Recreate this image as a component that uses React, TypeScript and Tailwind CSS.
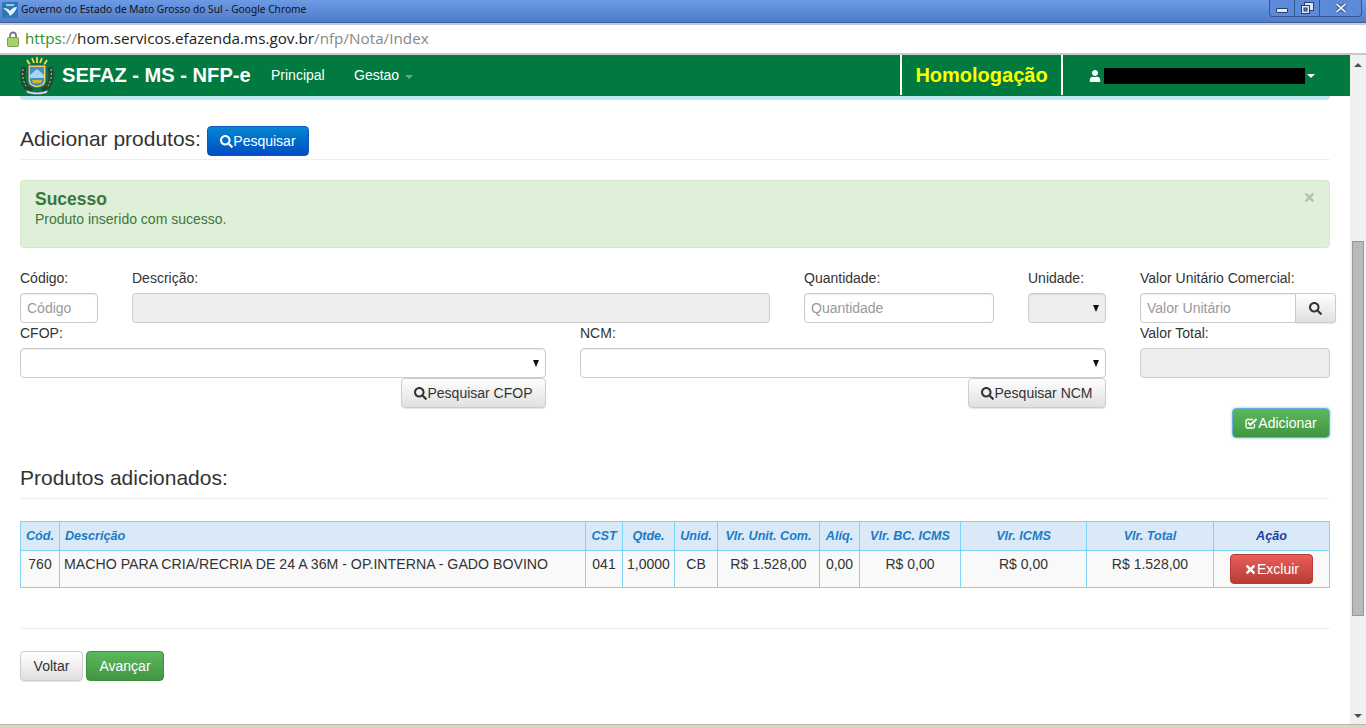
import { FaSearch, FaUser, FaTimes } from "react-icons/fa";

const columns = [
  { label: "Cód.", width: 39, value: "760" },
  { label: "Descrição", width: 526, value: "MACHO PARA CRIA/RECRIA DE 24 A 36M - OP.INTERNA - GADO BOVINO", left: true },
  { label: "CST", width: 37, value: "041" },
  { label: "Qtde.", width: 52, value: "1,0000" },
  { label: "Unid.", width: 43, value: "CB" },
  { label: "Vlr. Unit. Com.", width: 102, value: "R$ 1.528,00" },
  { label: "Alíq.", width: 40, value: "0,00" },
  { label: "Vlr. BC. ICMS", width: 101, value: "R$ 0,00" },
  { label: "Vlr. ICMS", width: 126, value: "R$ 0,00" },
  { label: "Vlr. Total", width: 127, value: "R$ 1.528,00" },
];

function Logo() {
  return (
    <svg width="34" height="38" viewBox="0 0 34 38">
      <g stroke="#f0e04a" strokeWidth="1.8">
        <path d="M17 0v6M12 1l2 5M22 1l-2 5M7 3l3 5M27 3l-3 5" />
      </g>
      <path d="M4 10c-2 8-2 15 3 21l5 3M30 10c2 8 2 15-3 21l-5 3" fill="none" stroke="#1f4a30" strokeWidth="5" />
      <path d="M3 12c-1 6 0 12 3 17M31 12c1 6 0 12-3 17" fill="none" stroke="#c4d2b4" strokeWidth="1" strokeDasharray="2 2" />
      <path d="M8 8h18v15c0 5-4 7-9 8-5-1-9-3-9-8z" fill="#e6d35a" stroke="#34506b" />
      <path d="M10 10h14v13c0 4-3 5-7 6-4-1-7-2-7-6z" fill="#3f8fd0" />
      <path d="M10 18l7-6 7 6v3H10z" fill="#a6d4ee" />
      <path d="M12 23h10l-1 3h-8z" fill="#d9b52a" />
      <path d="M6 33c7 3 15 3 22 0l-1 3c-7 2-13 2-20 0z" fill="#dfe8e8" stroke="#37606a" strokeWidth=".6" />
    </svg>
  );
}

function CheckIcon() {
  return (
    <svg width="13" height="12" viewBox="0 0 13 12" fill="none" stroke="white">
      <path d="M9.5 7v2.5a1.5 1.5 0 0 1-1.5 1.5H2.5A1.5 1.5 0 0 1 1 9.5V4a1.5 1.5 0 0 1 1.5-1.5H8" strokeWidth="1.3" />
      <path d="M3 5.5l2.4 2.4L11.5 2" strokeWidth="2" />
    </svg>
  );
}

function WindowButtons() {
  return (
    <div className="flex h-[17px] w-[93px] self-start rounded-b-[4px] border border-t-0 border-[#35558f] bg-[#5b8ad6]">
      <div className="flex w-[25px] items-center justify-center border-r border-[#35558f]">
        <div className="mt-[5px] h-[5px] w-[12px] rounded-[1px] border border-[#26406e] bg-[#dfe8f6]" />
      </div>
      <div className="flex w-[25px] items-center justify-center border-r border-[#35558f]">
        <svg width="13" height="12" viewBox="0 0 13 12" fill="none" stroke="#26406e">
          <rect x="3.5" y=".5" width="9" height="8" fill="#dfe8f6" />
          <rect x=".5" y="3.5" width="8" height="8" fill="#dfe8f6" />
          <rect x="3" y="6" width="3" height="3" fill="#5b8ad6" />
        </svg>
      </div>
      <div className="flex flex-1 items-center justify-center">
        <svg width="12" height="10" viewBox="0 0 12 10">
          <path d="M1.5 1l9 8M10.5 1l-9 8" stroke="#26406e" strokeWidth="3.4" />
          <path d="M1.5 1l9 8M10.5 1l-9 8" stroke="#dfe8f6" strokeWidth="1.8" />
        </svg>
      </div>
    </div>
  );
}

function Field({ label, className, children }: { label: string; className: string; children: React.ReactNode }) {
  return (
    <div className={className}>
      <div className="mb-[5px] h-[20px] leading-[20px]">{label}</div>
      {children}
    </div>
  );
}

function Select({ disabled }: { disabled?: boolean }) {
  return (
    <div className={`flex h-[30px] items-center justify-end rounded-[4px] border border-[#ccc] pr-[6px] shadow-[inset_0_1px_1px_rgba(0,0,0,0.075)] ${disabled ? "bg-[#eee]" : "bg-white"}`}>
      <svg width="6" height="7" viewBox="0 0 6 7"><path d="M0 0h6L3 7z" fill="#111" /></svg>
    </div>
  );
}

const inputClass = "h-[30px] w-full rounded-[4px] border border-[#ccc] bg-white px-[6px] text-[14px] shadow-[inset_0_1px_1px_rgba(0,0,0,0.075)] outline-none placeholder:text-[#999]";
const defaultBtn = "flex items-center justify-center rounded-[4px] border border-[#ccc] bg-gradient-to-b from-white to-[#e0e0e0] text-[#333] shadow-[0_1px_1px_rgba(0,0,0,0.1)]";

export default function App() {
  return (
    <div className="flex h-[728px] w-[1366px] flex-col overflow-hidden bg-white font-['Liberation_Sans',Arial,sans-serif] text-[14px] text-[#333]">
      {/* window title */}
      <div className="flex h-[23px] shrink-0 items-start justify-between border-b border-[#3a5f9e] bg-gradient-to-b from-[#6d9ae3] to-[#4f7ccb] pl-[2px] pr-[4px]">
        <div className="flex h-[20px] items-center gap-[3px]">
          <svg width="16" height="16" viewBox="0 0 16 16">
            <rect width="16" height="16" rx="1" fill="#2a7ab5" />
            <path d="M1 6c3 0 6 1 7 3 1-2 4-4 7-4-1 4-4 7-7 9-1-3-4-6-7-8z" fill="#e6f2f8" />
            <path d="M4 2h8v2H4z" fill="#9cc8e4" />
          </svg>
          <span className="font-['Noto_Sans',sans-serif] text-[10.2px] text-[#111]">Governo do Estado de Mato Grosso do Sul - Google Chrome</span>
        </div>
        <WindowButtons />
      </div>
      {/* address bar */}
      <div className="flex h-[32px] shrink-0 items-center border-y-2 border-y-[#c8c8c8] bg-white pl-[7px] pb-[1px] font-['Open_Sans',sans-serif] text-[15.25px]">
        <svg width="12" height="16" viewBox="0 0 12 16" className="mr-[6px]">
          <path d="M3 8V4.5a3 3 0 0 1 6 0V8" fill="none" stroke="#777" strokeWidth="1.8" />
          <rect x=".5" y="6.5" width="11" height="9" rx="1" fill="#a4d465" stroke="#7d9a55" />
        </svg>
        <span className="text-[#2f8f2f]">https</span>
        <span className="text-[#888]">://</span>
        <span className="text-[#222]">hom.servicos.efazenda.ms.gov.br</span>
        <span className="text-[#888]">/nfp/Nota/Index</span>
      </div>

      <div className="flex min-h-0 flex-1">
        <div className="flex w-[1350px] flex-col">
          {/* navbar */}
          <div className="flex h-[41px] shrink-0 items-center bg-[#007a3e] pl-[20px] text-white">
            <Logo />
            <span className="ml-[8px] w-[209px] text-[20.1px] font-bold">SEFAZ - MS - NFP-e</span>
            <span className="w-[83px]">Principal</span>
            <span className="flex items-center gap-[6px]">
              Gestao
              <span className="mt-[2px] h-0 w-0 border-x-[4px] border-t-[4px] border-x-transparent border-t-[#6aa886]" />
            </span>
            <div className="ml-auto flex h-[40px] w-[163px] items-center justify-center self-start border-x-2 border-white text-[20px] font-bold text-[#ffff00]">
              Homologação
            </div>
            <div className="flex w-[287px] items-center pl-[26px]">
              <FaUser className="mr-[3px] text-[12px]" />
              <div className="h-[16px] w-[201px] bg-black" />
              <span className="ml-[2px] h-0 w-0 border-x-[4px] border-t-[4px] border-x-transparent border-t-white" />
            </div>
          </div>

          <div className="min-h-0 flex-1 pl-[20px] pr-[20px]">
            <div className="h-[4px] rounded-b-[4px] bg-[#bce8f1]" />

            {/* add products */}
            <div className="mt-[26px] flex h-[34px] items-start gap-[6px] border-b border-[#eee]">
              <span className="text-[21px] leading-[26px]">Adicionar produtos:</span>
              <button className="flex h-[30px] w-[102px] items-center justify-center rounded-[4px] border border-[#0a5ab8] bg-gradient-to-b from-[#0a86d2] to-[#004dc4] text-white">
                <FaSearch className="text-[13px]" />Pesquisar
              </button>
            </div>

            <div className="relative mt-[20px] h-[68px] rounded-[4px] border border-[#d6e9c6] bg-[#dff0d8] px-[14px] pt-[8px] text-[#3c763d]">
              <div className="text-[17.5px] font-bold leading-[20px]">Sucesso</div>
              <div className="leading-[20px]">Produto inserido com sucesso.</div>
              <FaTimes className="absolute right-[13px] top-[10px] text-[13px] text-[#b4c4ae]" />
            </div>

            {/* form */}
            <div className="mt-[20px] flex">
              <Field label="Código:" className="mr-[34px] w-[78px] shrink-0">
                <input className={inputClass} placeholder="Código" />
              </Field>
              <Field label="Descrição:" className="mr-[34px] w-[638px] shrink-0">
                <div className="h-[30px] rounded-[4px] border border-[#ccc] bg-[#eee]" />
              </Field>
              <Field label="Quantidade:" className="mr-[34px] w-[190px] shrink-0">
                <input className={inputClass} placeholder="Quantidade" />
              </Field>
              <Field label="Unidade:" className="mr-[34px] w-[78px] shrink-0">
                <Select disabled />
              </Field>
              <Field label="Valor Unitário Comercial:" className="w-[196px] shrink-0">
                <div className="flex">
                  <input className={`${inputClass} rounded-r-none`} placeholder="Valor Unitário" />
                  <button className={`${defaultBtn} h-[30px] w-[40px] shrink-0 rounded-l-none border-l-0`}>
                    <FaSearch className="text-[13px]" />
                  </button>
                </div>
              </Field>
            </div>
            <div className="flex">
              <div className="mr-[34px] w-[526px]">
                <Field label="CFOP:" className="">
                  <Select />
                </Field>
                <button className={`${defaultBtn} ml-auto h-[30px] w-[145px]`}>
                  <FaSearch className="text-[13px]" />Pesquisar CFOP
                </button>
              </div>
              <div className="mr-[34px] w-[526px]">
                <Field label="NCM:" className="">
                  <Select />
                </Field>
                <button className={`${defaultBtn} ml-auto h-[30px] w-[138px]`}>
                  <FaSearch className="text-[13px]" />Pesquisar NCM
                </button>
              </div>
              <div className="w-[190px]">
                <Field label="Valor Total:" className="">
                  <div className="h-[30px] rounded-[4px] border border-[#ccc] bg-[#eee]" />
                </Field>
                <div className="mt-[30px] flex justify-end">
                  <button className="flex h-[30px] w-[98px] items-center justify-center rounded-[4px] border border-[#66afe9] bg-gradient-to-b from-[#5cb85c] to-[#419641] text-white shadow-[0_0_3px_rgba(102,175,233,0.7)]">
                    <CheckIcon />Adicionar
                  </button>
                </div>
              </div>
            </div>

            {/* products */}
            <div className="mt-[25px] h-[36px] border-b border-[#eee] text-[21px] leading-[30px]">Produtos adicionados:</div>
            <table className="mt-[22px] w-[1310px] table-fixed border-collapse border border-[#7fd3f3]">
              <thead>
                <tr className="h-[29px] bg-[#d9e9f8] text-[12.6px] font-bold italic text-[#1a7cc8]">
                  {columns.map((c) => (
                    <th key={c.label} style={{ width: c.width }} className={`border border-[#7fd3f3] px-[5px] font-bold ${c.left ? "text-left" : "text-center"}`}>{c.label}</th>
                  ))}
                  <th className="border border-[#7fd3f3] text-center font-bold text-[#1f3f9a]">Ação</th>
                </tr>
              </thead>
              <tbody>
                <tr className="h-[37px] bg-[#f9f9f9] align-top">
                  {columns.map((c) => (
                    <td key={c.label} className={`overflow-hidden whitespace-nowrap border border-[#7fd3f3] px-[4px] pt-[3px] leading-[20px] ${c.left ? "text-left text-[14.17px]" : "text-center"}`}>{c.value}</td>
                  ))}
                  <td className="border border-[#7fd3f3] pt-[3px]">
                    <button className="mx-auto flex h-[30px] w-[83px] items-center justify-center rounded-[4px] border border-[#b93a34] bg-gradient-to-b from-[#e8605c] to-[#b93a34] text-white">
                      <FaTimes className="text-[13px]" />Excluir
                    </button>
                  </td>
                </tr>
              </tbody>
            </table>

            <div className="mt-[40px] border-t border-[#eee] pt-[22px]">
              <div className="flex gap-[3px]">
                <button className={`${defaultBtn} h-[30px] w-[63px]`}>Voltar</button>
                <button className="h-[30px] w-[78px] rounded-[4px] border border-[#3e8f3e] bg-gradient-to-b from-[#5cb85c] to-[#419641] text-white">Avançar</button>
              </div>
            </div>
          </div>
        </div>

        {/* scrollbar */}
        <div className="flex w-[16px] shrink-0 flex-col bg-[#f0f0f0]">
          <div className="flex h-[186px] w-full justify-center pt-[8px]">
            <span className="h-0 w-0 border-x-[4px] border-b-[4px] border-x-transparent border-b-[#505050]" />
          </div>
          <div className="ml-[2px] h-[375px] w-[12px] border border-[#999] bg-[#b9b9b9]" />
          <div className="mt-auto flex justify-center pb-[6px]">
            <span className="block h-0 w-0 border-x-[4px] border-t-[4px] border-x-transparent border-t-[#505050]" />
          </div>
        </div>
      </div>
      <div className="h-[4px] shrink-0 border-t border-[#bdb9ab] bg-[#d8d5c8]" />
    </div>
  );
}
